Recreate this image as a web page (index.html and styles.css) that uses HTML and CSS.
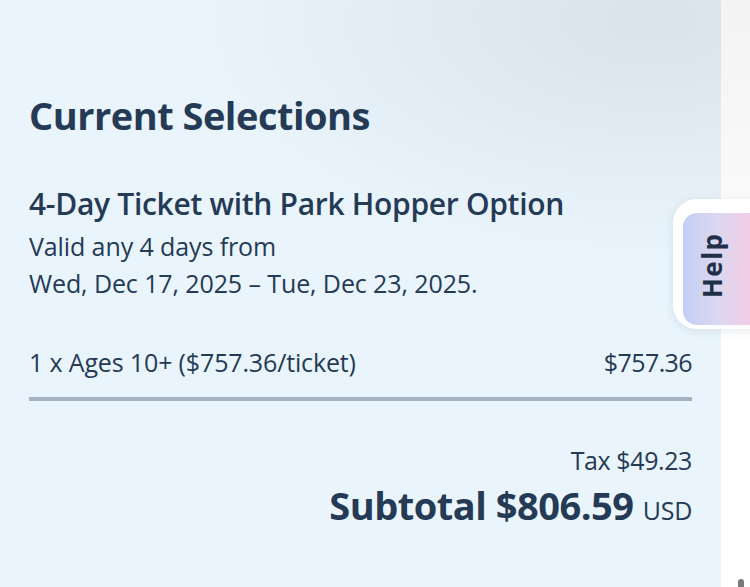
FILE: index.html
```html
<!DOCTYPE html>
<html lang="en">
<head>
<meta charset="utf-8">
<title>Current Selections</title>
<link rel="stylesheet" href="styles.css">
</head>
<body>
<div class="page">
  <main class="panel">
    <h1 class="title">Current Selections</h1>
    <section class="ticket">
      <h2 class="ticket-name">4-Day Ticket with Park Hopper Option</h2>
      <p class="ticket-desc">Valid any 4 days from<br>Wed, Dec 17, 2025 – Tue, Dec 23, 2025.</p>
    </section>
    <div class="line-item">
      <span>1 x Ages 10+ ($757.36/ticket)</span>
      <span class="line-price">$757.36</span>
    </div>
    <div class="totals">
      <div class="tax">Tax $49.23</div>
      <div class="subtotal">Subtotal $806.59 <span class="currency">USD</span></div>
    </div>
  </main>
  <aside class="side"></aside>
  <button class="help"><span class="help-inner"><span class="help-text">Help</span></span></button>
  <div class="scroll-thumb"></div>
</div>
</body>
</html>
```

FILE: styles.css
```css
* { box-sizing: border-box; }
html, body { margin: 0; padding: 0; }
body {
  font-family: "Open Sans", Lato, sans-serif;
  color: #253a55;
  width: 750px;
  height: 587px;
  overflow: hidden;
}
.page {
  display: flex;
  width: 750px;
  height: 587px;
  position: relative;
}
.panel {
  width: 721px;
  flex: none;
  padding: 91px 29px 0 29px;
  background:
    radial-gradient(ellipse 460px 240px at 650px 20px, rgba(205, 215, 224, 0.6), rgba(205, 215, 224, 0) 100%),
    #e9f4fc;
}
.side {
  flex: 1;
  background: linear-gradient(#f3f3f3, #ffffff 60%);
}
.title {
  margin: 0;
  font-size: 38px;
  font-weight: 700;
  line-height: 48px;
  letter-spacing: -0.5px;
}
.ticket { margin-top: 46px; }
.ticket-name {
  margin: 0;
  font-size: 30px;
  font-weight: 600;
  line-height: 38px;
  letter-spacing: -0.3px;
}
.ticket-desc {
  margin: 5px 0 0;
  font-size: 25px;
  font-weight: 400;
  line-height: 37px;
  letter-spacing: -0.1px;
}
.line-item {
  display: flex;
  justify-content: space-between;
  margin-top: 42px;
  font-size: 25px;
  line-height: 36px;
  letter-spacing: -0.15px;
  padding-bottom: 17px;
  border-bottom: 4px solid #a5b1c3;
}
.line-price { letter-spacing: -0.6px; }
.totals {
  text-align: right;
  margin-top: 42px;
}
.tax {
  font-size: 25px;
  line-height: 34px;
  letter-spacing: -0.4px;
}
.subtotal {
  font-size: 38px;
  font-weight: 700;
  line-height: 48px;
  margin-top: 4px;
  letter-spacing: -0.5px;
}
.currency {
  font-size: 25px;
  font-weight: 400;
  letter-spacing: -0.3px;
}
.help {
  position: absolute;
  left: 673px;
  top: 199px;
  width: 100px;
  height: 130px;
  padding: 9px 0 0 10px;
  border: none;
  border-radius: 24px 0 0 24px;
  background: #ffffff;
  box-shadow: 0 2px 8px rgba(60, 80, 110, 0.12);
  font-family: inherit;
  display: block;
  cursor: pointer;
}
.help-inner {
  display: flex;
  align-items: center;
  justify-content: center;
  width: 90px;
  height: 112px;
  border-radius: 14px 0 0 14px;
  background: linear-gradient(90deg, #c2cff5 0%, #dcd8f0 40%, #f3cbe5 75%);
}
.help-text {
  display: block;
  transform: rotate(-90deg) translateX(3px);
  font-size: 26px;
  font-weight: 700;
  color: #1f3048;
  margin-right: 32px;
  padding-left: 1.5px;
  letter-spacing: 1.5px;
}
.scroll-thumb {
  position: absolute;
  left: 738px;
  top: 579px;
  width: 6px;
  height: 12px;
  border-radius: 3px;
  background: #7a7a7a;
}
```
